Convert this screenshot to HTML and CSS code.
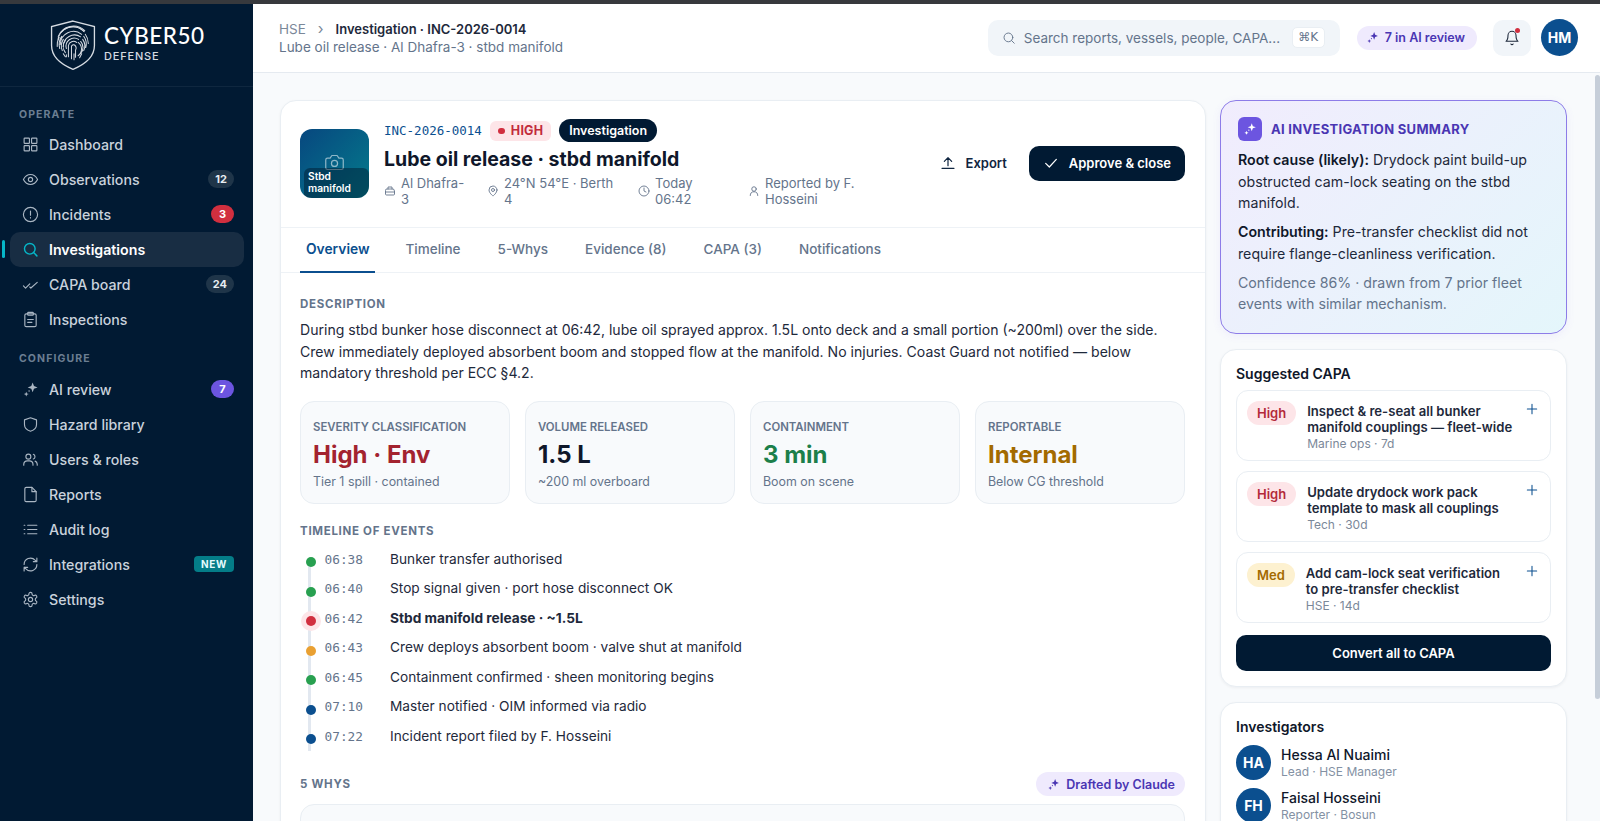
FILE: index.html
```html
<!DOCTYPE html>
<html lang="en">
<head>
    <meta charset="UTF-8">
    <meta name="viewport" content="width=device-width, initial-scale=1.0">
    <title>Investigation INC-2026-0014</title>
    <link rel="stylesheet" href="styles.css">
</head>

<body>
    <svg class="sprite" xmlns="http://www.w3.org/2000/svg">
        <symbol id="i-grid" viewBox="0 0 24 24"><rect x="3" y="3" width="7.5" height="7.5" rx="1"/><rect x="13.5" y="3" width="7.5" height="7.5" rx="1"/><rect x="3" y="13.5" width="7.5" height="7.5" rx="1"/><rect x="13.5" y="13.5" width="7.5" height="7.5" rx="1"/></symbol>
        <symbol id="i-eye" viewBox="0 0 24 24"><path d="M2 12s3.6-7 10-7 10 7 10 7-3.6 7-10 7-10-7-10-7z"/><circle cx="12" cy="12" r="3"/></symbol>
        <symbol id="i-alert" viewBox="0 0 24 24"><circle cx="12" cy="12" r="10"/><path d="M12 7v6M12 16.5v.5"/></symbol>
        <symbol id="i-search" viewBox="0 0 24 24"><circle cx="11" cy="11" r="7.5"/><path d="M21 21l-4.6-4.6"/></symbol>
        <symbol id="i-checks" viewBox="0 0 24 24"><path d="M2 14l3 3 6-6M11 15.5l1.5 1.5 9-8"/></symbol>
        <symbol id="i-clip" viewBox="0 0 24 24"><rect x="4" y="4" width="16" height="18" rx="2"/><rect x="8" y="2" width="8" height="4" rx="1"/><path d="M8 12h8M8 16h6"/></symbol>
        <symbol id="i-spark" viewBox="0 0 24 24"><path class="fill" d="M15 2l1.9 5.1L22 9l-5.100 1.900L15 16l-1.900-5.100L8 9l5.100-1.900z"/><path class="fill" d="M6 15l1 2.500 2.500 1L7 19.500 6 22l-1-2.500-2.500-1L5 17.500z"/><circle class="fill" cx="10" cy="14" r="1"/></symbol>
        <symbol id="i-shield" viewBox="0 0 24 24"><path d="M12 2.500l8.500 3V12c0 5-3.500 8-8.500 9.500C7 20 3.500 17 3.500 12V5.500z"/></symbol>
        <symbol id="i-users" viewBox="0 0 24 24"><circle cx="9" cy="8" r="3.500"/><path d="M2.500 20v-1.500A5 5 0 0 1 7.500 14h3a5 5 0 0 1 5 4.500V20"/><path d="M16 4.700a3.500 3.500 0 0 1 0 6.600M18.500 14.300a5 5 0 0 1 3 4.200V20"/></symbol>
        <symbol id="i-file" viewBox="0 0 24 24"><path d="M14 2H6a2 2 0 0 0-2 2v16a2 2 0 0 0 2 2h12a2 2 0 0 0 2-2V8z"/><path d="M14 2v6h6"/></symbol>
        <symbol id="i-list" viewBox="0 0 24 24"><path d="M8 6h13M8 12h13M8 18h13M3 6h1M3 12h1M3 18h1"/></symbol>
        <symbol id="i-sync" viewBox="0 0 24 24"><path d="M3 12a9 9 0 0 1 15.500-6.200L21 8M21 3v5h-5"/><path d="M21 12a9 9 0 0 1-15.500 6.200L3 16M3 21v-5h5"/></symbol>
        <symbol id="i-gear" viewBox="0 0 24 24"><circle cx="12" cy="12" r="3"/><path d="M12.200 2h-.4a2 2 0 0 0-2 2v.2a2 2 0 0 1-1 1.700l-.4.300a2 2 0 0 1-2 0l-.2-.1a2 2 0 0 0-2.700.7l-.2.400a2 2 0 0 0 .7 2.700l.2.100a2 2 0 0 1 1 1.700v.6a2 2 0 0 1-1 1.700l-.2.100a2 2 0 0 0-.7 2.700l.2.400a2 2 0 0 0 2.700.7l.2-.1a2 2 0 0 1 2 0l.4.300a2 2 0 0 1 1 1.700v.2a2 2 0 0 0 2 2h.4a2 2 0 0 0 2-2v-.2a2 2 0 0 1 1-1.700l.4-.3a2 2 0 0 1 2 0l.2.100a2 2 0 0 0 2.700-.7l.2-.4a2 2 0 0 0-.7-2.700l-.2-.1a2 2 0 0 1-1-1.700v-.6a2 2 0 0 1 1-1.700l.2-.1a2 2 0 0 0 .7-2.700l-.2-.4a2 2 0 0 0-2.700-.7l-.2.100a2 2 0 0 1-2 0l-.4-.3a2 2 0 0 1-1-1.700V4a2 2 0 0 0-2-2z"/></symbol>
        <symbol id="i-bell" viewBox="0 0 24 24"><path d="M6 8a6 6 0 0 1 12 0c0 7 3 9 3 9H3s3-2 3-9"/><path d="M10.300 21a2 2 0 0 0 3.400 0"/></symbol>
        <symbol id="i-upload" viewBox="0 0 24 24"><path d="M12 16V4M6.500 9.500L12 4l5.500 5.500M3 20h18"/></symbol>
        <symbol id="i-check" viewBox="0 0 24 24"><path d="M4 12.500l5.500 5.500L20 6.500"/></symbol>
        <symbol id="i-camera" viewBox="0 0 24 24"><path d="M9 4h6l2 3h3a2 2 0 0 1 2 2v9a2 2 0 0 1-2 2H4a2 2 0 0 1-2-2V9a2 2 0 0 1 2-2h3z"/><circle cx="12" cy="13" r="3.500"/></symbol>
        <symbol id="i-ship" viewBox="0 0 24 24"><path d="M8 8V4h8v4"/><path d="M5 8h14l2 4v6a2 2 0 0 1-2 2H5a2 2 0 0 1-2-2v-6z"/><path d="M3 14h18"/></symbol>
        <symbol id="i-pin" viewBox="0 0 24 24"><path d="M20 10c0 6-8 12-8 12s-8-6-8-12a8 8 0 0 1 16 0z"/><circle cx="12" cy="10" r="3"/></symbol>
        <symbol id="i-clock" viewBox="0 0 24 24"><circle cx="12" cy="12" r="10"/><path d="M12 6v6l4 2"/></symbol>
        <symbol id="i-user" viewBox="0 0 24 24"><circle cx="12" cy="8" r="4.500"/><path d="M4.500 21a7.500 7.500 0 0 1 15 0"/></symbol>
        <symbol id="i-plus" viewBox="0 0 24 24"><path d="M12 4v16M4 12h16"/></symbol>
    </svg>

    <div class="topstrip"></div>
    <div class="app">
        <aside class="sidebar">
            <div class="brand">
                <svg class="brand-mark" viewBox="0 0 45 49" fill="none" stroke="#d5dbe2">
                    <path stroke-width="1.300" d="M22.500 1L43.500 6.500V25C43.500 37 33 44 22.500 48.300 12 44 1.500 37 1.500 25V6.500Z"/>
                    <g stroke-width="1" stroke-linecap="round">
                        <path d="M11 12a15 15 0 0 1 22-1"/>
                        <path d="M8 16a16 16 0 0 1 26-5.500"/>
                        <path d="M7 26a17 17 0 0 1 2-9M7.500 21a15 15 0 0 1 26-9.500"/>
                        <path d="M9.500 28a14 14 0 0 1 2-12M10 24a13 13 0 0 1 21-10"/>
                        <path d="M12 30a12 12 0 0 1 1-11M13 26a11 11 0 0 1 17-9.500"/>
                        <path d="M15 32a10 10 0 0 1 0-12M16 28a8 8 0 0 1 12-9"/>
                        <path d="M37.500 23a15 15 0 0 0-3-9M35 27a13 13 0 0 0-2-11M33 30a11 11 0 0 0-1-11"/>
                        <path d="M30 33a9 9 0 0 0 0-12M27.500 35a8 8 0 0 0 0-13"/>
                        <path d="M18 36V25a5 5 0 0 1 8-3"/>
                        <path d="M21 38V26a2 2 0 0 1 3-1.500 4 4 0 0 1 1 5v7"/>
                        <path d="M16 36v-2M13 33l2 3M31 33l-2 4M23.500 39v-6"/>
                    </g>
                </svg>
                <div class="brand-text">
                    <div class="brand-name">CYBER50</div>
                    <div class="brand-sub">DEFENSE</div>
                </div>
            </div>
            <nav class="nav">
                <div class="nav-label">OPERATE</div>
                <a class="nav-item"><svg class="ico"><use href="#i-grid"/></svg>Dashboard</a>
                <a class="nav-item"><svg class="ico"><use href="#i-eye"/></svg>Observations<span class="count">12</span></a>
                <a class="nav-item"><svg class="ico"><use href="#i-alert"/></svg>Incidents<span class="count count-red">3</span></a>
                <a class="nav-item active"><svg class="ico"><use href="#i-search"/></svg>Investigations</a>
                <a class="nav-item"><svg class="ico"><use href="#i-checks"/></svg>CAPA board<span class="count">24</span></a>
                <a class="nav-item"><svg class="ico"><use href="#i-clip"/></svg>Inspections</a>
                <div class="nav-label nav-label-next">CONFIGURE</div>
                <a class="nav-item"><svg class="ico"><use href="#i-spark"/></svg>AI review<span class="count count-purple">7</span></a>
                <a class="nav-item"><svg class="ico"><use href="#i-shield"/></svg>Hazard library</a>
                <a class="nav-item"><svg class="ico"><use href="#i-users"/></svg>Users &amp; roles</a>
                <a class="nav-item"><svg class="ico"><use href="#i-file"/></svg>Reports</a>
                <a class="nav-item"><svg class="ico"><use href="#i-list"/></svg>Audit log</a>
                <a class="nav-item"><svg class="ico"><use href="#i-sync"/></svg>Integrations<span class="tag-new">NEW</span></a>
                <a class="nav-item"><svg class="ico"><use href="#i-gear"/></svg>Settings</a>
            </nav>
        </aside>

        <div class="content">
            <header class="topbar">
                <div class="crumbs">
                    <div class="crumb-line"><span class="crumb-root">HSE</span><span class="crumb-sep">›</span><span class="crumb-page">Investigation · INC-2026-0014</span></div>
                    <div class="crumb-sub">Lube oil release · Al Dhafra-3 · stbd manifold</div>
                </div>
                <div class="search">
                    <svg class="ico ico-search"><use href="#i-search"/></svg>
                    <span class="search-text">Search reports, vessels, people, CAPA...</span>
                    <span class="kbd">⌘K</span>
                </div>
                <div class="ai-pill"><svg class="ico ico-pill"><use href="#i-spark"/></svg>7 in AI review</div>
                <div class="bell"><svg class="ico ico-bell"><use href="#i-bell"/></svg><span class="bell-dot"></span></div>
                <div class="avatar avatar-top">HM</div>
            </header>

            <main class="main">
                <section class="card case">
                    <div class="case-head">
                        <div class="thumb">
                            <svg class="ico ico-camera"><use href="#i-camera"/></svg>
                            <div class="thumb-label">Stbd manifold</div>
                        </div>
                        <div class="case-info">
                            <div class="case-tags">
                                <span class="case-id">INC-2026-0014</span>
                                <span class="tag-high"><i></i>HIGH</span>
                                <span class="tag-status">Investigation</span>
                            </div>
                            <h1 class="case-title">Lube oil release · stbd manifold</h1>
                            <div class="case-meta">
                                <div class="meta-item"><svg class="ico"><use href="#i-ship"/></svg><span>Al Dhafra-3</span></div>
                                <div class="meta-item"><svg class="ico"><use href="#i-pin"/></svg><span>24°N 54°E · Berth 4</span></div>
                                <div class="meta-item"><svg class="ico"><use href="#i-clock"/></svg><span>Today 06:42</span></div>
                                <div class="meta-item"><svg class="ico"><use href="#i-user"/></svg><span>Reported by F. Hosseini</span></div>
                            </div>
                        </div>
                        <div class="case-actions">
                            <button class="btn-plain"><svg class="ico"><use href="#i-upload"/></svg>Export</button>
                            <button class="btn-dark"><svg class="ico"><use href="#i-check"/></svg>Approve &amp; close</button>
                        </div>
                    </div>

                    <div class="tabs">
                        <a class="tab active">Overview</a>
                        <a class="tab">Timeline</a>
                        <a class="tab">5-Whys</a>
                        <a class="tab">Evidence (8)</a>
                        <a class="tab">CAPA (3)</a>
                        <a class="tab">Notifications</a>
                    </div>

                    <div class="case-body">
                        <div class="section-label">DESCRIPTION</div>
                        <p class="description">During stbd bunker hose disconnect at 06:42, lube oil sprayed approx. 1.5L onto deck and a small portion (~200ml) over the side. Crew immediately deployed absorbent boom and stopped flow at the manifold. No injuries. Coast Guard not notified — below mandatory threshold per ECC §4.2.</p>

                        <div class="stats">
                            <div class="stat">
                                <div class="stat-label">SEVERITY CLASSIFICATION</div>
                                <div class="stat-value red">High · Env</div>
                                <div class="stat-sub">Tier 1 spill · contained</div>
                            </div>
                            <div class="stat">
                                <div class="stat-label">VOLUME RELEASED</div>
                                <div class="stat-value">1.5 L</div>
                                <div class="stat-sub">~200 ml overboard</div>
                            </div>
                            <div class="stat">
                                <div class="stat-label">CONTAINMENT</div>
                                <div class="stat-value green">3 min</div>
                                <div class="stat-sub">Boom on scene</div>
                            </div>
                            <div class="stat">
                                <div class="stat-label">REPORTABLE</div>
                                <div class="stat-value amber">Internal</div>
                                <div class="stat-sub">Below CG threshold</div>
                            </div>
                        </div>

                        <div class="section-label section-label-timeline">TIMELINE OF EVENTS</div>
                        <div class="timeline">
                            <div class="event"><i class="dot dot-green"></i><span class="event-time">06:38</span><span>Bunker transfer authorised</span></div>
                            <div class="event"><i class="dot dot-green"></i><span class="event-time">06:40</span><span>Stop signal given · port hose disconnect OK</span></div>
                            <div class="event event-key"><i class="dot dot-red"></i><span class="event-time">06:42</span><span>Stbd manifold release · ~1.5L</span></div>
                            <div class="event"><i class="dot dot-amber"></i><span class="event-time">06:43</span><span>Crew deploys absorbent boom · valve shut at manifold</span></div>
                            <div class="event"><i class="dot dot-green"></i><span class="event-time">06:45</span><span>Containment confirmed · sheen monitoring begins</span></div>
                            <div class="event"><i class="dot dot-blue"></i><span class="event-time">07:10</span><span>Master notified · OIM informed via radio</span></div>
                            <div class="event"><i class="dot dot-blue"></i><span class="event-time">07:22</span><span>Incident report filed by F. Hosseini</span></div>
                        </div>

                        <div class="whys-head">
                            <div class="section-label section-label-flat">5 WHYS</div>
                            <div class="ai-pill ai-pill-small"><svg class="ico ico-pill"><use href="#i-spark"/></svg>Drafted by Claude</div>
                        </div>
                        <div class="whys-box"></div>
                    </div>
                </section>

                <aside class="side">
                    <section class="ai-card">
                        <div class="ai-head">
                            <span class="ai-icon"><svg class="ico"><use href="#i-spark"/></svg></span>
                            <span class="ai-title">AI INVESTIGATION SUMMARY</span>
                        </div>
                        <p><b>Root cause (likely):</b> Drydock paint build-up obstructed cam-lock seating on the stbd manifold.</p>
                        <p><b>Contributing:</b> Pre-transfer checklist did not require flange-cleanliness verification.</p>
                        <p class="ai-note">Confidence 86% · drawn from 7 prior fleet events with similar mechanism.</p>
                    </section>

                    <section class="card side-card">
                        <h2 class="side-title">Suggested CAPA</h2>
                        <div class="capa-item">
                            <span class="prio prio-high">High</span>
                            <div class="capa-text">
                                <div class="capa-name">Inspect &amp; re-seat all bunker manifold couplings — fleet-wide</div>
                                <div class="capa-meta">Marine ops · 7d</div>
                            </div>
                            <svg class="ico ico-plus"><use href="#i-plus"/></svg>
                        </div>
                        <div class="capa-item">
                            <span class="prio prio-high">High</span>
                            <div class="capa-text">
                                <div class="capa-name">Update drydock work pack template to mask all couplings</div>
                                <div class="capa-meta">Tech · 30d</div>
                            </div>
                            <svg class="ico ico-plus"><use href="#i-plus"/></svg>
                        </div>
                        <div class="capa-item">
                            <span class="prio prio-med">Med</span>
                            <div class="capa-text">
                                <div class="capa-name">Add cam-lock seat verification to pre-transfer checklist</div>
                                <div class="capa-meta">HSE · 14d</div>
                            </div>
                            <svg class="ico ico-plus"><use href="#i-plus"/></svg>
                        </div>
                        <button class="btn-wide">Convert all to CAPA</button>
                    </section>

                    <section class="card side-card">
                        <h2 class="side-title side-title-people">Investigators</h2>
                        <div class="person">
                            <div class="avatar">HA</div>
                            <div>
                                <div class="person-name">Hessa Al Nuaimi</div>
                                <div class="person-role">Lead · HSE Manager</div>
                            </div>
                        </div>
                        <div class="person">
                            <div class="avatar">FH</div>
                            <div>
                                <div class="person-name">Faisal Hosseini</div>
                                <div class="person-role">Reporter · Bosun</div>
                            </div>
                        </div>
                    </section>
                </aside>
                <div class="scroll-thumb"></div>
            </main>
        </div>
    </div>
</body>
</html>
```

FILE: styles.css
```css
* {
    box-sizing: border-box;
}
body {
    margin: 0;
    height: 100vh;
    overflow: hidden;
    display: flex;
    flex-direction: column;
    font-family: Inter, "Noto Sans", sans-serif;
    font-size: 14px;
    color: #0f172a;
    background: #f8fafc;
}
.sprite {
    display: none;
}
.fill {
    fill: currentColor;
    stroke: none;
}
.ico {
    width: 16px;
    height: 16px;
    flex: none;
    fill: none;
    stroke: currentColor;
    stroke-width: 1.8;
    stroke-linecap: round;
    stroke-linejoin: round;
}
.topstrip {
    height: 4px;
    flex: none;
    background: #37393d;
}
.app {
    flex: 1;
    display: flex;
    min-height: 0;
}

/* sidebar */
.sidebar {
    width: 253px;
    flex: none;
    background: #011a33;
    color: #c9d2dc;
}
.brand {
    height: 83px;
    display: flex;
    align-items: center;
    gap: 8px;
    padding-left: 50px;
    border-bottom: 1px solid rgba(255, 255, 255, 0.06);
}
.brand-mark {
    width: 46px;
    height: 50px;
    flex: none;
}
.brand-text {
    padding-bottom: 2px;
}
.brand-name {
    margin-bottom: 2px;
    font-family: Lato, sans-serif;
    font-size: 22.5px;
    line-height: 22px;
    font-weight: 500;
    letter-spacing: 0.5px;
    color: #fff;
}
.brand-sub {
    font-size: 11px;
    line-height: 14px;
    font-weight: 500;
    letter-spacing: 0.8px;
    color: #d5dbe2;
}
.nav {
    padding: 21px 9px 0 10px;
}
.nav-label {
    height: 14px;
    margin: 0 0 4.5px 9px;
    font-size: 10.5px;
    line-height: 14px;
    font-weight: 700;
    letter-spacing: 1.1px;
    color: #6b7e92;
}
.nav-label-next {
    margin-top: 15px;
    margin-bottom: 6px;
}
.nav-item {
    position: relative;
    height: 35px;
    display: flex;
    align-items: center;
    gap: 10px;
    padding: 0 10px 0 12px;
    border-radius: 10px;
    font-size: 14.2px;
    font-weight: 500;
    color: #c9d2dc;
}
.nav-item .ico {
    width: 17px;
    height: 17px;
    color: #aab6c3;
    stroke-width: 1.6;
}
.nav-item.active {
    background: #182d43;
    color: #fff;
    font-weight: 600;
}
.nav-item.active .ico {
    color: #06b6c8;
    stroke-width: 2;
}
.nav-item.active::before {
    content: "";
    position: absolute;
    left: -8px;
    top: 8px;
    width: 3px;
    height: 18px;
    border-radius: 2px;
    background: #06b6c8;
}
.count {
    margin-left: auto;
    min-width: 23px;
    height: 18px;
    padding: 0 7px;
    border-radius: 9px;
    background: #1f3549;
    color: #e8edf2;
    font-size: 11px;
    line-height: 18px;
    font-weight: 700;
    text-align: center;
}
.count-red {
    background: #d12f3f;
    color: #fff;
}
.count-purple {
    background: #6c55e0;
    color: #fff;
}
.tag-new {
    margin-left: auto;
    width: 40px;
    height: 16px;
    border-radius: 4px;
    background: #047d88;
    color: #e6fbfd;
    font-size: 10px;
    line-height: 16px;
    font-weight: 700;
    letter-spacing: 0.6px;
    text-align: center;
}

/* top bar */
.content {
    flex: 1;
    min-width: 0;
    display: flex;
    flex-direction: column;
}
.topbar {
    height: 69px;
    flex: none;
    display: flex;
    align-items: center;
    padding: 0 22px 1px 26px;
    background: #fff;
    border-bottom: 1px solid #e5eaf0;
}
.crumbs {
    flex: 1;
    font-size: 13.5px;
    line-height: 18px;
}
.crumb-line {
    display: flex;
    align-items: center;
}
.crumb-root {
    color: #7b8899;
}
.crumb-sep {
    margin: 0 12px;
    color: #7b8899;
    font-size: 15px;
    line-height: 18px;
}
.crumb-page {
    font-size: 13px;
    font-weight: 600;
    color: #1e293b;
}
.crumb-sub {
    color: #64748b;
}
.search {
    width: 352px;
    height: 36px;
    display: flex;
    align-items: center;
    gap: 8px;
    padding: 0 15px 0 14px;
    border-radius: 10px;
    background: #f1f5f9;
    color: #64748b;
}
.ico-search {
    width: 14px;
    height: 14px;
    stroke-width: 1.6;
}
.search-text {
    flex: 1;
    font-size: 13.5px;
    white-space: nowrap;
}
.kbd {
    width: 33px;
    height: 21px;
    border-radius: 5px;
    background: #fff;
    border: 1px solid #e9eef3;
    font-family: "DejaVu Sans", sans-serif;
    font-size: 12px;
    line-height: 19px;
    text-align: center;
}
.ai-pill {
    height: 24px;
    display: flex;
    align-items: center;
    gap: 6px;
    margin-left: 17px;
    padding: 0 12px 0 9px;
    border-radius: 12px;
    background: #efeafd;
    color: #4a36b3;
    font-size: 12.5px;
    font-weight: 600;
    white-space: nowrap;
}
.ico-pill {
    width: 13px;
    height: 13px;
}
.bell {
    position: relative;
    width: 38px;
    height: 36px;
    display: flex;
    align-items: center;
    justify-content: center;
    margin-left: 16px;
    border-radius: 10px;
    background: #f1f5f9;
    color: #1e293b;
}
.ico-bell {
    stroke-width: 1.6;
}
.bell-dot {
    position: absolute;
    top: 8px;
    right: 11px;
    width: 5px;
    height: 5px;
    border-radius: 50%;
    background: #d12f3f;
}
.avatar {
    width: 35px;
    height: 35px;
    flex: none;
    display: flex;
    align-items: center;
    justify-content: center;
    border-radius: 50%;
    background: #0b4f8f;
    color: #fff;
    font-size: 14px;
    font-weight: 700;
}
.avatar-top {
    width: 37px;
    height: 37px;
    margin-left: 10px;
}

/* page */
.main {
    position: relative;
    flex: 1;
    min-height: 0;
    overflow: hidden;
    display: grid;
    grid-template-columns: 926px 347px;
    gap: 14px;
    align-items: start;
    padding: 27px 0 0 27px;
}
.scroll-thumb {
    position: absolute;
    top: 2px;
    right: 0;
    width: 5.5px;
    height: 624px;
    border-radius: 3px;
    background: #c6ced9;
}
.card {
    background: #fff;
    border: 1px solid #e9eef3;
    border-radius: 16px;
    box-shadow: 0 1px 3px rgba(15, 23, 42, 0.05);
}
.case-head {
    display: flex;
    align-items: center;
    gap: 15px;
    padding: 18px 20px 20px 19px;
    border-bottom: 1px solid #eef2f6;
}
.thumb {
    position: relative;
    width: 69px;
    height: 69px;
    flex: none;
    overflow: hidden;
    display: flex;
    justify-content: center;
    padding-top: 23px;
    border-radius: 12px;
    background: linear-gradient(135deg, #07477f, #047c8c);
}
.ico-camera {
    width: 21px;
    height: 21px;
    color: rgba(255, 255, 255, 0.55);
    stroke-width: 1.4;
}
.thumb-label {
    position: absolute;
    left: 4px;
    right: 0;
    bottom: 0;
    height: 30px;
    padding: 2px 4px;
    border-radius: 6px 6px 0 0;
    background: rgba(0, 20, 40, 0.45);
    color: #fff;
    font-size: 10.2px;
    line-height: 12px;
    font-weight: 600;
}
.case-info {
    flex: 1;
    min-width: 0;
}
.case-tags {
    height: 23px;
    display: flex;
    align-items: center;
    gap: 8px;
}
.case-id {
    font-family: "DejaVu Sans Mono", monospace;
    font-size: 12.5px;
    font-weight: 500;
    color: #0b4f8f;
}
.tag-high {
    height: 20px;
    display: flex;
    align-items: center;
    gap: 6px;
    padding: 0 8px;
    border-radius: 6px;
    background: #fde5e8;
    color: #c22b3b;
    font-size: 12.5px;
    font-weight: 700;
    letter-spacing: 0.2px;
}
.tag-high i {
    width: 7px;
    height: 6px;
    border-radius: 3px;
    background: #d12f3f;
}
.tag-status {
    height: 23px;
    padding: 0 10px;
    border-radius: 12px;
    background: #011a33;
    color: #fff;
    font-size: 12.5px;
    line-height: 23px;
    font-weight: 600;
}
.case-title {
    margin: 4px 0 3px;
    font-size: 19.5px;
    line-height: 26px;
    font-weight: 700;
    color: #0f172a;
}
.case-meta {
    display: grid;
    grid-template-columns: 85px 133px 92px 130px;
    gap: 18px;
    font-size: 13px;
    line-height: 16px;
    color: #64748b;
}
.meta-item {
    display: flex;
    align-items: center;
    gap: 5px;
}
.meta-item .ico {
    width: 12px;
    height: 12px;
    stroke-width: 1.8;
}
.case-actions {
    display: flex;
    align-items: center;
    gap: 22px;
}
.btn-plain,
.btn-dark,
.btn-wide {
    font-family: inherit;
    font-size: 13px;
    font-weight: 600;
    border: none;
    white-space: nowrap;
}
.btn-plain {
    display: flex;
    align-items: center;
    gap: 10px;
    padding: 0;
    background: none;
    color: #0f2540;
}
.btn-dark {
    height: 35px;
    display: flex;
    align-items: center;
    gap: 10px;
    padding: 0 14px;
    border-radius: 10px;
    background: #011a33;
    color: #fff;
}
.tabs {
    display: flex;
    gap: 25px;
    padding: 0 20px 0 19px;
    height: 45px;
    border-bottom: 1px solid #eef2f6;
}
.tab {
    padding: 0 6px;
    font-size: 13.5px;
    line-height: 43px;
    font-weight: 500;
    color: #64748b;
}
.tab.active {
    height: 45px;
    padding: 0 5px 0 6px;
    color: #0b4f8f;
    font-size: 13.8px;
    font-weight: 600;
    border-bottom: 2px solid #0b4f8f;
}
.case-body {
    padding: 24px 20px 0 19px;
}
.section-label {
    height: 14px;
    margin-bottom: 8px;
    font-size: 11.5px;
    line-height: 14px;
    font-weight: 700;
    letter-spacing: 0.7px;
    color: #64748b;
}
.description {
    margin: 0 0 17px;
    font-size: 14.07px;
    line-height: 21.7px;
    color: #1e293b;
}
.stats {
    display: grid;
    grid-template-columns: repeat(4, 1fr);
    gap: 15px;
}
.stat {
    height: 103px;
    padding: 18px 12px 0;
    border: 1px solid #e9eef3;
    border-radius: 14px;
    background: #f8fafc;
}
.stat-label {
    font-size: 11.4px;
    line-height: 14px;
    font-weight: 600;
    color: #64748b;
}
.stat-value {
    margin: 6px 0 4px;
    font-size: 24px;
    line-height: 30px;
    font-weight: 700;
    color: #0f172a;
}
.stat-value.red {
    color: #a3232f;
}
.stat-value.green {
    color: #1c7f4a;
}
.stat-value.amber {
    color: #a36a00;
}
.stat-sub {
    font-size: 12.4px;
    line-height: 16px;
    color: #64748b;
}
.section-label-timeline {
    margin: 20px 0 6.5px;
}
.timeline {
    position: relative;
    padding-left: 6px;
}
.timeline::before {
    content: "";
    position: absolute;
    left: 8px;
    top: 15px;
    bottom: 0;
    width: 2.5px;
    background: #e2e8f0;
}
.event {
    position: relative;
    height: 29.5px;
    display: grid;
    grid-template-columns: 10px 57px 1fr;
    gap: 8.5px;
    font-size: 13.7px;
    line-height: 29.5px;
    color: #1e293b;
}
.event-key {
    font-weight: 700;
}
.event-time {
    font-family: "DejaVu Sans Mono", monospace;
    font-size: 12.8px;
    font-weight: 400;
    color: #64748b;
}
.dot {
    width: 10px;
    height: 10px;
    margin-top: 12.5px;
    border-radius: 50%;
}
.dot-green {
    background: #28a050;
}
.dot-red {
    background: #d12f3f;
    box-shadow: 0 0 0 5px #fde5e8;
}
.dot-amber {
    background: #e9a032;
}
.dot-blue {
    background: #0b4f8f;
}
.whys-head {
    display: flex;
    justify-content: space-between;
    align-items: center;
    margin-top: 21px;
}
.section-label-flat {
    margin: 0;
}
.ai-pill-small {
    margin: 0;
    padding: 0 10px 0 11px;
}
.whys-box {
    height: 90px;
    margin-top: 8px;
    border: 1px solid #e9eef3;
    border-radius: 14px;
    background: #f8fafc;
}

/* right column */
.side {
    display: flex;
    flex-direction: column;
    gap: 15px;
}
.ai-card {
    height: 234px;
    padding: 16px 17px 0;
    border: 1.5px solid #8d7ce8;
    border-radius: 16px;
    background: linear-gradient(135deg, #f1ecfd, #e4f6fb);
    box-shadow: 0 2px 8px rgba(109, 85, 224, 0.08);
}
.ai-head {
    display: flex;
    align-items: center;
    gap: 9px;
    margin-bottom: 8px;
}
.ai-icon {
    width: 24px;
    height: 24px;
    display: flex;
    align-items: center;
    justify-content: center;
    border-radius: 6px;
    background: #6c55e0;
    color: #fff;
}
.ai-icon .ico {
    width: 14px;
    height: 14px;
}
.ai-title {
    font-size: 13px;
    font-weight: 700;
    letter-spacing: 0.3px;
    color: #4a36b3;
}
.ai-card p {
    margin: 0 0 7px;
    font-size: 14.2px;
    line-height: 21.7px;
    color: #1e293b;
}
.ai-card p b {
    font-weight: 600;
    color: #0f172a;
}
.ai-card .ai-note {
    color: #64748b;
}
.side-card {
    padding: 15px;
}
.side-title {
    margin: 0 0 7px;
    font-size: 14px;
    line-height: 18px;
    font-weight: 600;
    color: #0f172a;
}
.side-title-people {
    margin-bottom: 9px;
}
.capa-item {
    height: 71px;
    display: flex;
    align-items: flex-start;
    gap: 11px;
    margin-bottom: 10px;
    padding: 10px;
    border: 1px solid #e9eef3;
    border-radius: 12px;
    background: #fff;
}
.prio {
    height: 24px;
    padding: 0 10px;
    border-radius: 12px;
    font-size: 13px;
    line-height: 24px;
    font-weight: 600;
}
.prio-high {
    background: #fde5e8;
    color: #b32a3a;
}
.prio-med {
    background: #fdf1d0;
    color: #a36a00;
}
.capa-text {
    flex: 1;
    min-width: 0;
    margin-top: 1.5px;
}
.capa-name {
    font-size: 13.1px;
    line-height: 16.5px;
    font-weight: 600;
    color: #1e293b;
}
.capa-meta {
    font-size: 12px;
    line-height: 16px;
    color: #7b8899;
}
.ico-plus {
    width: 14px;
    height: 14px;
    margin: 1px 1px 0 0;
    color: #0b4f8f;
    stroke-width: 1.8;
}
.btn-wide {
    width: 100%;
    height: 36px;
    margin-top: 2px;
    border-radius: 10px;
    background: #011a33;
    color: #fff;
    font-size: 13px;
}
.person {
    display: flex;
    align-items: center;
    gap: 10px;
    margin-bottom: 8px;
}
.person-name {
    font-size: 14px;
    line-height: 18px;
    font-weight: 500;
    color: #0f172a;
}
.person-role {
    font-size: 12px;
    line-height: 15px;
    color: #8391a3;
}
```
